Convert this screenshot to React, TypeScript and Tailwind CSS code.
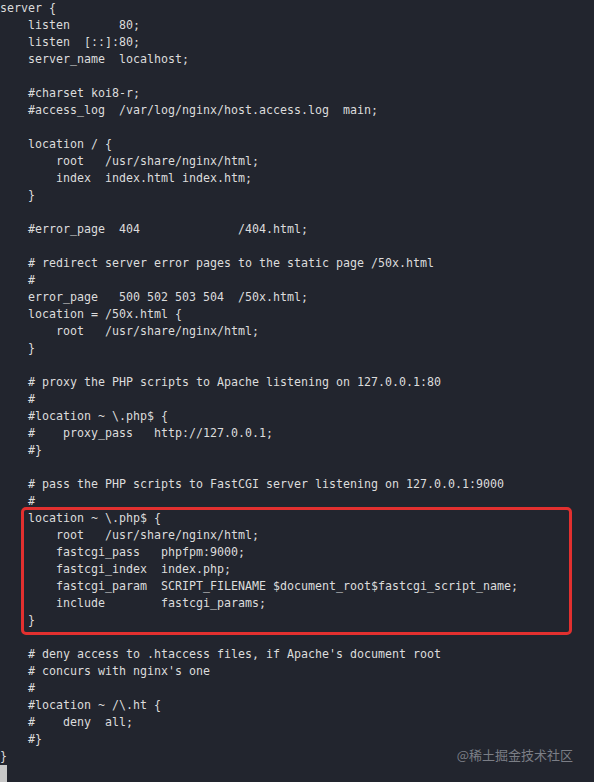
import React from "react";

const before = [
  "server {",
  "    listen       80;",
  "    listen  [::]:80;",
  "    server_name  localhost;",
  "",
  "    #charset koi8-r;",
  "    #access_log  /var/log/nginx/host.access.log  main;",
  "",
  "    location / {",
  "        root   /usr/share/nginx/html;",
  "        index  index.html index.htm;",
  "    }",
  "",
  "    #error_page  404              /404.html;",
  "",
  "    # redirect server error pages to the static page /50x.html",
  "    #",
  "    error_page   500 502 503 504  /50x.html;",
  "    location = /50x.html {",
  "        root   /usr/share/nginx/html;",
  "    }",
  "",
  "    # proxy the PHP scripts to Apache listening on 127.0.0.1:80",
  "    #",
  "    #location ~ \\.php$ {",
  "    #    proxy_pass   http://127.0.0.1;",
  "    #}",
  "",
  "    # pass the PHP scripts to FastCGI server listening on 127.0.0.1:9000",
  "    #",
];

const boxed = [
  "location ~ \\.php$ {",
  "    root   /usr/share/nginx/html;",
  "    fastcgi_pass   phpfpm:9000;",
  "    fastcgi_index  index.php;",
  "    fastcgi_param  SCRIPT_FILENAME $document_root$fastcgi_script_name;",
  "    include        fastcgi_params;",
  "}",
];

const after = [
  "",
  "    # deny access to .htaccess files, if Apache's document root",
  "    # concurs with nginx's one",
  "    #",
  "    #location ~ /\\.ht {",
  "    #    deny  all;",
  "    #}",
];

function Line({ t }: { t: string }) {
  return <div className="h-[17px] leading-[17px] whitespace-pre">{t || " "}</div>;
}

export default function App() {
  return (
    <div
      className="w-[594px] h-[782px] overflow-hidden bg-[#22252e] text-[#dcdcdc] text-[11.63px]"
      style={{ fontFamily: '"DejaVu Sans Mono", "Liberation Mono", monospace' }}
    >
      {before.map((t, i) => (
        <Line key={"b" + i} t={t} />
      ))}
      <div className="ml-[21px] w-[551px] -mt-[3px] -mb-[6px] border-[3px] border-[#e2302f] rounded-[5px] pl-[4px] pb-[3px]">
        {boxed.map((t, i) => (
          <Line key={"x" + i} t={t} />
        ))}
      </div>
      {after.map((t, i) => (
        <Line key={"a" + i} t={t} />
      ))}
      <div className="h-[17px] leading-[17px] flex items-center">
        <span className="whitespace-pre">{"}"}</span>
        <span
          className="ml-auto mr-[21px] text-[13px] text-[#7b7e86] -mt-[4px]"
          style={{ fontFamily: '"Noto Sans CJK SC", "Noto Sans", sans-serif' }}
        >
          @稀土掘金技术社区
        </span>
      </div>
      <div className="w-[7px] h-[17px] bg-[#c8c8c8]" />
    </div>
  );
}
